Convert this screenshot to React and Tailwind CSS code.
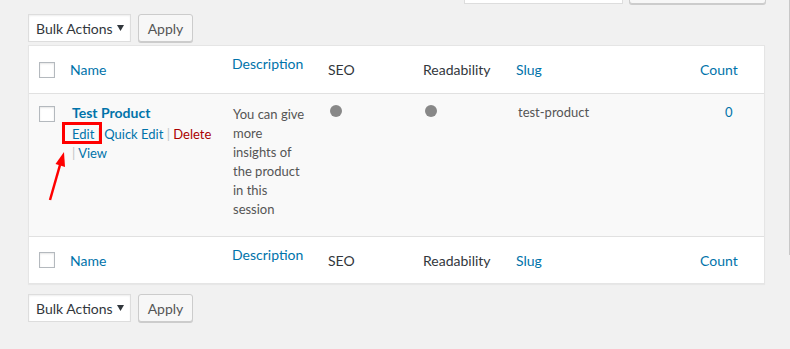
import React from 'react';

const cols = 'grid grid-cols-[33px_160px_96px_95px_93px_154px_104px]';

const Checkbox = () => (
    <div className="w-4 h-4 border border-[#b4b9be] bg-white shadow-[inset_0_1px_2px_rgba(0,0,0,0.1)]"></div>
);

const BulkBar = () => (
    <div className="flex h-[28px] gap-[7px]">
        <div className="w-[103px] border border-[#ddd] bg-white shadow-[inset_0_1px_2px_rgba(0,0,0,0.07)] flex items-center pl-[7px] text-[14px] text-[#32373c]">
            <span>Bulk Actions</span>
            <svg className="ml-auto mr-[6px]" width="7" height="6" viewBox="0 0 7 6">
                <path d="M0 0 H7 L3.5 6 Z" fill="#32373c" />
            </svg>
        </div>
        <div className="w-[55px] border border-[#ccc] bg-[#f7f7f7] rounded-[3px] shadow-[0_1px_0_#ccc] flex items-center justify-center text-[14px] text-[#555]">
            Apply
        </div>
    </div>
);

// header and footer rows share the same columns
const HeadRow = ({ height, border }) => (
    <div className={`${cols} ${height} ${border} text-[14px]`}>
        <div className="flex items-center pl-[10px]"><Checkbox /></div>
        <div className="flex items-center pl-[8px] text-[#0073aa]">Name</div>
        <div className="pl-[10px] pt-[8px] leading-[19px] text-[#0073aa]">Description</div>
        <div className="flex items-center pl-[10px] text-[#32373c]">SEO</div>
        <div className="flex items-center pl-[10px] text-[#32373c]">Readability</div>
        <div className="flex items-center pl-[10px] text-[#0073aa]">Slug</div>
        <div className="flex items-center pl-[40px] text-[#0073aa]">Count</div>
    </div>
);

const App = () => {
    return (
        <div className="relative w-[790px] h-[349px] overflow-hidden bg-[#f1f1f1] font-['Lato','Noto_Sans',sans-serif]">
            <div className="pl-[28px] pr-[25px]">
                {/* search box row, cut off at the top */}
                <div className="flex h-[5px] items-end">
                    <div className="ml-[436px] w-[159px] h-[28px] mb-[1px] shrink-0 border border-[#ddd] bg-white"></div>
                    <div className="ml-[6px] w-[137px] h-[28px] mb-[1px] shrink-0 border border-[#ccc] bg-[#f7f7f7] rounded-[3px] shadow-[0_1px_0_#ccc]"></div>
                </div>

                <div className="mt-[9px]"><BulkBar /></div>

                <div className="mt-[3px] border border-[#e5e5e5] bg-white shadow-[0_1px_1px_rgba(0,0,0,0.04)]">
                    <HeadRow height="h-[48px]" border="border-b border-[#e1e1e1]" />

                    <div className={`${cols} h-[143px] bg-[#f9f9f9] border-b border-[#e1e1e1] text-[13px] leading-[19px]`}>
                        <div className="pl-[10px] pt-[12px]"><Checkbox /></div>
                        <div className="pl-[10px] pt-[9px]">
                            <div className="text-[14px] font-bold text-[#0073aa]">Test Product</div>
                            <div className="mt-[3px] whitespace-nowrap">
                                <span className="text-[#0073aa]">Edit</span>
                                <span className="text-[#c3c4c7]"> | </span>
                                <span className="text-[#0073aa]">Quick Edit</span>
                                <span className="text-[#c3c4c7]"> | </span>
                                <span className="text-[#a00]">Delete</span>
                            </div>
                            <div className="whitespace-nowrap">
                                <span className="text-[#c3c4c7]">| </span>
                                <span className="text-[#0073aa]">View</span>
                            </div>
                        </div>
                        <div className="pl-[11px] pt-[11px] text-[#555] whitespace-nowrap">
                            You can give<br />more<br />insights of<br />the product<br />in this<br />session
                        </div>
                        <div className="pl-[12px] pt-[11px]">
                            <div className="w-3 h-3 rounded-full bg-[#888]"></div>
                        </div>
                        <div className="pl-[12px] pt-[11px]">
                            <div className="w-3 h-3 rounded-full bg-[#888]"></div>
                        </div>
                        <div className="pl-[12px] pt-[9px] text-[#555]">test-product</div>
                        <div className="pl-[65px] pt-[9px] text-[#0073aa]">0</div>
                    </div>

                    <HeadRow height="h-[46px]" border="" />
                </div>

                <div className="mt-[10px]"><BulkBar /></div>
            </div>

            {/* annotation drawn over the screenshot */}
            <div className="absolute left-[62px] top-[122px] w-[40px] h-[22px] border-[3px] border-[#f00]"></div>
            <svg className="absolute left-0 top-0" width="120" height="220" viewBox="0 0 120 220">
                <line x1="50" y1="200" x2="60" y2="165" stroke="#f00" strokeWidth="2.5" />
                <path d="M64 152 L65 167 L55.5 164 Z" fill="#f00" />
            </svg>

            {/* page scrollbar edge */}
            <div className="absolute right-0 top-0 w-px h-[255px] bg-[#c8c8c8]"></div>
        </div>
    );
};

export default App;
